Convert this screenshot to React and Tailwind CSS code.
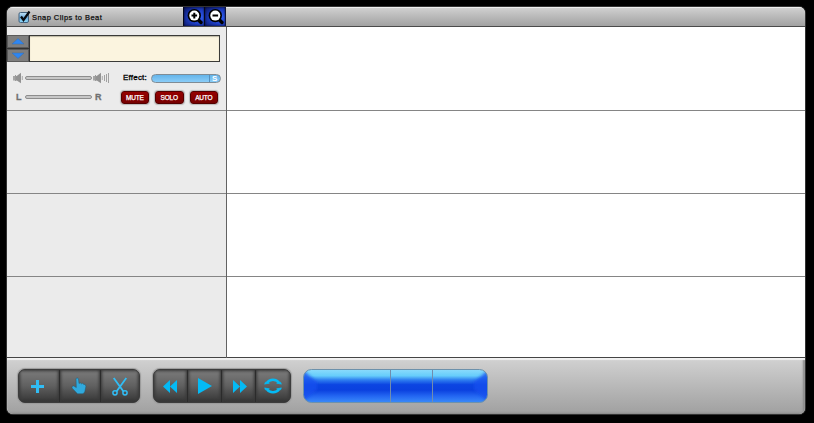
import React from "react";

function ZoomIcon({ minus }) {
  return (
    <div className="h-[19px] w-[21px] border-l border-[#05081c] bg-[radial-gradient(ellipse_at_85%_55%,#2f5cf0_0%,#1f40c8_45%,#091258_100%)] shadow-[inset_0_0_2px_#04082c]">
      <svg width="20" height="19" viewBox="0 0 20 19" className="block">
        <path d="M13.5 12L17 15.5" stroke="#000" strokeWidth="3.4" strokeLinecap="round" />
        <circle cx="10.3" cy="8.6" r="6.7" fill="#000" />
        <circle cx="10.3" cy="8.6" r="5" fill="#fff" />
        <path d={minus ? "M7.5 8.6H13.1" : "M7.5 8.6H13.1M10.3 5.8V11.4"} stroke="#000" strokeWidth="2" />
      </svg>
    </div>
  );
}

function Header() {
  return (
    <div className="flex h-5 shrink-0 border-b border-[#4a4a4a] bg-linear-to-b from-[#d2d2d2] to-[#a2a2a2] shadow-[inset_0_1px_0_#eeeeee]">
      <div className="flex w-44 items-center pl-[11px]">
        <svg width="13" height="14" viewBox="0 0 13 14" className="shrink-0">
          <defs>
            <linearGradient id="check" x1="0" y1="0" x2="0" y2="1">
              <stop offset="0" stopColor="#c7e4f6" />
              <stop offset=".5" stopColor="#6daddf" />
              <stop offset="1" stopColor="#8edafa" />
            </linearGradient>
          </defs>
          <rect x="1" y="2.5" width="9.5" height="10" rx="1.5" fill="url(#check)" stroke="#43617d" />
          <path d="M3 6.5L5.5 10L11.5 1.5" fill="none" stroke="#080b10" strokeWidth="2.2" />
        </svg>
        <span className="ml-px mt-[2px] whitespace-nowrap text-[7.5px] leading-none tracking-[0.45px] text-[#111] [-webkit-text-stroke:0.25px_#111]">Snap Clips to Beat</span>
      </div>
      <ZoomIcon />
      <ZoomIcon minus />
      <div className="h-[19px] w-px bg-[#10163a]" />
    </div>
  );
}

function Arrow({ down }) {
  return (
    <div className="flex h-[13px] items-center justify-center border border-[#5a5a5a] bg-[#7e7e7e]">
      <svg width="14" height="7" viewBox="0 0 14 7" className="block shrink-0">
        <path d={down ? "M1 1H13L7 6.5Z" : "M1 6H13L7 .5Z"} fill="#2e86f2" stroke="#3c6ca6" strokeWidth=".5" />
      </svg>
    </div>
  );
}

function Speaker({ loud }) {
  return (
    <svg width={loud ? 17 : 10} height="12" viewBox={loud ? "0 0 17 12" : "0 0 10 12"} className="shrink-0">
      <path d="M0 4H4V8.5H0Z" fill="#a5a5a5" />
      <path d="M3 4.5L8 .8V11.2L3 8Z" fill="#929292" />
      <path d="M2.5 3V9" stroke="#999" />
      <path d="M9.3 4V8" stroke="#aaa" />
      {loud && <path d="M11.5 3V9M13.5 2V10M15.5 1V11" stroke="#999" strokeWidth=".9" />}
    </svg>
  );
}

function Slider() {
  return <div className="h-1 w-[67px] shrink-0 rounded-full border border-[#8d8d8d] bg-[#c7c7c7]" />;
}

function Pill({ children }) {
  return (
    <div className="flex h-[13px] w-[28.5px] items-center justify-center rounded-[3px] border border-[#540000] bg-linear-to-b from-[#960000] to-[#760000] pt-px text-[6.5px] leading-none tracking-[-0.2px] text-white shadow-[0_0_1px_1px_#b8b8b8] [-webkit-text-stroke:0.25px_#fff]">
      {children}
    </div>
  );
}

function TrackControls() {
  return (
    <div className="flex h-[84px] flex-col border-b border-[#858585] pt-2">
      <div className="flex h-[27px]">
        <div className="w-[23px] border-r border-[#333] bg-[#444]">
          <Arrow />
          <div className="h-px bg-[#333]" />
          <Arrow down />
        </div>
        <div className="h-[27px] w-[190px] border border-l-0 border-[#3a3a38] bg-[#fbf4df] shadow-[inset_0_1px_1px_#bdb8a5]" />
      </div>
      <div className="mt-[10px] flex h-3 items-center pl-[6px]">
        <Speaker />
        <div className="ml-[2px]"><Slider /></div>
        <div className="ml-px"><Speaker loud /></div>
        <span className="ml-[13px] w-[28px] whitespace-nowrap text-[8px] leading-none tracking-[0.2px] text-black [-webkit-text-stroke:0.3px_#000]">Effect:</span>
        <div className="mt-px flex h-[9px] w-[70px] justify-end overflow-hidden rounded-full border border-[#7f8c96] bg-linear-to-b from-[#64b4ea] to-[#8acdf8]">
          <div className="flex w-[11px] items-center border-l border-[#5590be] pl-[2px] text-[8px] font-bold leading-none text-white">S</div>
        </div>
      </div>
      <div className="mt-[7px] flex h-[13px] items-center pl-[9px]">
        <span className="w-[9px] text-[9px] font-bold leading-none text-[#707070] [-webkit-text-stroke:0.3px_#707070]">L</span>
        <div className="mb-px"><Slider /></div>
        <span className="ml-[3px] w-[25.5px] text-[9px] font-bold leading-none text-[#707070] [-webkit-text-stroke:0.3px_#707070]">R</span>
        <div className="flex gap-[6px]">
          <Pill>MUTE</Pill>
          <Pill>SOLO</Pill>
          <Pill>AUTO</Pill>
        </div>
      </div>
    </div>
  );
}

function ToolButton({ children, className }) {
  return (
    <div className={`flex h-8 items-center justify-center bg-linear-to-b from-[#7c7c7c] via-[#606060] to-[#363636] shadow-[inset_0_0_3px_1px_#383838] ${className}`}>
      {children}
    </div>
  );
}

function Display() {
  return (
    <svg width="185" height="34" viewBox="0 0 185 34" className="ml-[12px] block">
      <defs>
        <linearGradient id="glass" x1="0" y1="0" x2="0" y2="1">
          <stop offset="0" stopColor="#8edcfc" />
          <stop offset=".2" stopColor="#66cdfb" />
          <stop offset=".32" stopColor="#2f7ff0" />
          <stop offset=".46" stopColor="#0c45e2" />
          <stop offset=".62" stopColor="#0b41df" />
          <stop offset=".8" stopColor="#2467f2" />
          <stop offset="1" stopColor="#3c8efa" />
        </linearGradient>
        <clipPath id="lcd"><rect x=".5" y=".5" width="184" height="33" rx="8" /></clipPath>
        <filter id="soft" x="-50%" y="-20%" width="200%" height="140%"><feGaussianBlur stdDeviation="1.5" /></filter>
      </defs>
      <g clipPath="url(#lcd)">
        <rect width="185" height="34" fill="url(#glass)" />
        <path d="M-3 -1L1 2L14 13V20L3 30L-3 34ZM188 -1L184 2L171 13V20L182 30L188 34Z" fill="#1650ee" filter="url(#soft)" opacity=".8" />
      </g>
      <path d="M87.5 1V33M129.5 1V33" stroke="#718dad" />
      <rect x=".5" y=".5" width="184" height="33" rx="8" fill="none" stroke="#6d91ab" />
    </svg>
  );
}

function Footer() {
  const group = "flex h-[34px] overflow-hidden rounded-[7px] border border-[#3c3c3c] bg-[#2b2b2b] shadow-[0_0_1px_1px_#999]";
  return (
    <div className="flex h-14 shrink-0 items-start bg-linear-to-b from-[#d2d2d2] to-[#a0a0a0] pl-[11px] pt-[11px] shadow-[inset_0_2px_1px_#f2f2f2,inset_-2px_-1px_2px_#888]">
      <div className={`${group} w-[122px] gap-px`}>
        <ToolButton className="w-10">
          <svg width="13" height="13" viewBox="0 0 13 13" className="mt-[1px] -ml-[3px]"><path d="M6.5 0V13M0 6.5H13" stroke="#31bdf5" strokeWidth="3" /></svg>
        </ToolButton>
        <ToolButton className="w-10">
          <svg width="16" height="18" viewBox="0 0 16 18" className="-ml-[3px]">
            <path d="M5 2C5 .7 7.4 .7 7.5 2L8 6.5L9.2 5.8L10.5 6.8L11.7 6.3L12.8 7.4L14.3 7.6L14.9 9.5L13.7 15L12 16.8H6.5L1.2 11.2C.2 9.5 2.2 8.2 3.3 9.3L5.3 10.5Z" fill="#30a9dd" stroke="#28586c" strokeWidth=".5" />
          </svg>
        </ToolButton>
        <ToolButton className="w-[38px]">
          <svg width="16" height="19" viewBox="0 0 16 19" className="-ml-px" fill="none" stroke="#31bdf5">
            <path d="M1.7 1L11.5 14.5M14.3 1L4.5 14.5" strokeWidth="1.8" />
            <circle cx="3" cy="15.8" r="2.1" strokeWidth="1.5" />
            <circle cx="13" cy="15.8" r="2.1" strokeWidth="1.5" />
          </svg>
        </ToolButton>
      </div>
      <div className={`${group} ml-[13px] w-[138px] gap-px`}>
        <ToolButton className="w-[33px]">
          <svg width="15" height="14" viewBox="0 0 15 14" className="-ml-px mt-[2px]"><path d="M7 0V13L0 6.5ZM14 0V13L7 6.5Z" fill="#04baf5" /></svg>
        </ToolButton>
        <ToolButton className="w-[33px]">
          <svg width="14" height="16" viewBox="0 0 14 16"><path d="M0 0L14 8L0 16Z" fill="#04baf5" /></svg>
        </ToolButton>
        <ToolButton className="w-[33px]">
          <svg width="15" height="14" viewBox="0 0 15 14" className="ml-[4px] mt-[2px]"><path d="M0 0L7 6.5L0 13ZM7 0L14 6.5L7 13Z" fill="#04baf5" /></svg>
        </ToolButton>
        <ToolButton className="w-[34px]">
          <svg width="18" height="16" viewBox="0 0 18 16" fill="none" stroke="#04baf5" strokeWidth="2.4">
            <path d="M2.8 5C5.5 .7 12.5 .7 15.2 5M2.8 11C5.5 15.3 12.5 15.3 15.2 11" />
            <path d="M.5 6.2L1.5 4L5.5 5.2ZM17.5 6.2L16.5 4L12.5 5.2ZM.5 9.8L1.5 12L5.5 10.8ZM17.5 9.8L16.5 12L12.5 10.8Z" fill="#04baf5" stroke="#04baf5" strokeWidth=".5" />
          </svg>
        </ToolButton>
      </div>
      <Display />
    </div>
  );
}

export default function App() {
  return (
    <div className="h-[423px] w-[814px] overflow-hidden bg-black pl-[7px] pt-[7px] [font-family:'Liberation_Sans',Arial,sans-serif]">
      <div className="flex h-[407px] w-[798px] flex-col overflow-hidden rounded-[6px] bg-white shadow-[0_0_0_1px_#333]">
        <Header />
        <div className="flex h-[331px]">
          <div className="w-[220px] border-r border-[#626262] bg-[#ebebeb]">
            <TrackControls />
            <div className="h-[83px] border-b border-[#858585]" />
            <div className="h-[83px] border-b border-[#858585]" />
            <div className="h-[81px] border-b border-[#444]" />
          </div>
          <div className="flex-1 bg-white">
            <div className="h-[84px] border-b border-[#858585]" />
            <div className="h-[83px] border-b border-[#858585]" />
            <div className="h-[83px] border-b border-[#858585]" />
            <div className="h-[81px] border-b border-[#444]" />
          </div>
        </div>
        <Footer />
      </div>
    </div>
  );
}
